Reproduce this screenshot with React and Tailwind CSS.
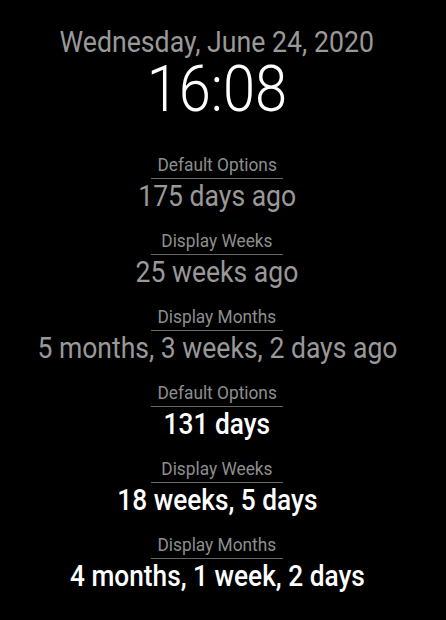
import React from "react";

const counters = [
  { title: "Default Options", value: "175 days ago", bright: false },
  { title: "Display Weeks", value: "25 weeks ago", bright: false },
  { title: "Display Months", value: "5 months, 3 weeks, 2 days ago", bright: false },
  { title: "Default Options", value: "131 days", bright: true },
  { title: "Display Weeks", value: "18 weeks, 5 days", bright: true },
  { title: "Display Months", value: "4 months, 1 week, 2 days", bright: true },
];

const Counter = ({ title, value, bright }) => (
  <div className="flex flex-col items-center">
    <div className="w-[132px] border-b border-[#666] pb-[4px] text-center text-[18px] leading-[18px] text-[#8e8e8e]">
      <span className="inline-block scale-x-[0.96] whitespace-nowrap">{title}</span>
    </div>
    {bright ? (
      <div className="text-center text-[30px] leading-[33px] whitespace-nowrap text-white font-medium">
        <span className="inline-block scale-x-[0.875]">{value}</span>
      </div>
    ) : (
      <div className="text-center text-[30px] leading-[33px] whitespace-nowrap text-[#999]">
        <span className="inline-block scale-x-[0.885]">{value}</span>
      </div>
    )}
  </div>
);

export default function App() {
  return (
    <div className="h-[620px] bg-black pr-[12px] font-['Roboto',sans-serif] overflow-hidden">
      {/* Clock */}
      <div className="flex flex-col items-center pt-[24px]">
        <div className="text-[30px] leading-[35px] text-[#999] whitespace-nowrap">
          <span className="inline-block scale-x-[0.89]">Wednesday, June 24, 2020</span>
        </div>
        <div className="text-[65px] leading-[61px] font-light text-white">
          <span className="inline-block scale-x-[0.89]">16:08</span>
        </div>
      </div>

      {/* Countdowns */}
      <div className="mt-[36px] flex flex-col gap-[20px]">
        {counters.map((c, i) => (
          <Counter key={i} {...c} />
        ))}
      </div>
    </div>
  );
}
